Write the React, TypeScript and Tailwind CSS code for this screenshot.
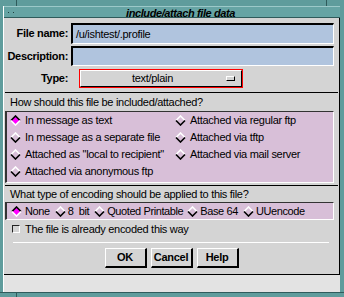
import React from 'react';

function Diamond({ on }: { on?: boolean }) {
  return (
    <svg width="11" height="11" viewBox="0 0 11 11" className="shrink-0">
      {on && <polygon points="5.5,1 10,5.5 5.5,10 1,5.5" fill="#ff00ff" />}
      <polyline points="1,5.5 5.5,1 10,5.5" fill="none" stroke={on ? '#000' : '#fff'} strokeWidth="1.6" />
      <polyline points="1,5.5 5.5,10 10,5.5" fill="none" stroke={on ? '#fff' : '#000'} strokeWidth="1.6" />
    </svg>
  );
}

function Radio({ label, on }: { label: string; on?: boolean }) {
  return (
    <div className="h-[17px] flex items-center gap-[4px]">
      <Diamond on={on} />
      <span className="whitespace-pre">{label}</span>
    </div>
  );
}

export default function App() {
  const field = 'ml-[3px] w-[263px] bg-[#b0c4de] border-t-2 border-l-2 border-black border-b border-r border-b-white border-r-white';
  const btn = 'w-[42px] h-[20px] bg-[#d4d4d4] border-t border-l border-white border-b-2 border-r-2 border-b-black border-r-black font-bold flex items-center justify-center';

  return (
    <div className="w-[344px] h-[297px] bg-[#5f9c9c] flex flex-col overflow-hidden text-[11px] text-black tracking-[-0.3px] font-['Liberation_Sans',Arial,sans-serif]">
      <div className="h-[6px] flex shrink-0">
        <div className="ml-[16px] w-px bg-[#2f5b5b]" />
        <div className="ml-[309px] w-px bg-[#2f5b5b]" />
      </div>

      <div className="ml-[3px] w-[337px] flex flex-col border-l border-white shrink-0">
        {/* title bar */}
        <div className="h-[12px] bg-[#66a4a4] border-t border-[#9cc9c9] border-b border-b-[#2f5b5b] flex items-center relative">
          <div className="flex gap-[4px] ml-[4px]">
            <div className="w-px h-px bg-[#1f3f3f]" />
            <div className="w-px h-px bg-[#1f3f3f]" />
          </div>
          <span className="absolute left-[122px] top-[-2px] italic font-bold text-[11px] tracking-[-0.4px]">include/attach file data</span>
        </div>

        {/* body */}
        <div className="h-[257px] bg-[#d4d4d4] border-r border-b border-black flex flex-col">
          <div className="mt-[5px] flex items-center">
            <div className="w-[64px] text-right font-bold">File name:</div>
            <div className={`${field} h-[21px] flex items-center pl-[3px]`}>/u/ishtest/.profile</div>
          </div>
          <div className="mt-[2px] flex items-center">
            <div className="w-[64px] text-right font-bold">Description:</div>
            <div className={`${field} h-[20px]`} />
          </div>
          <div className="mt-[3px] flex items-center">
            <div className="w-[64px] text-right font-bold">Type:</div>
            <div className="ml-[11px] w-[164px] h-[19px] border border-[#ff0000]">
              <div className="h-full bg-[#d4d4d4] border-t border-l border-white border-b border-r border-b-black border-r-black flex items-center">
                <span className="ml-[51px]">text/plain</span>
                <div className="ml-auto mr-[6px] w-[9px] h-[5px] border-t border-l border-white border-b border-r border-b-black border-r-black" />
              </div>
            </div>
          </div>

          <div className="mt-[4px] mx-[1px] h-px bg-black" />
          <div className="h-[18px] flex items-center pl-[6px]">How should this file be included/attached?</div>

          <div className="ml-[1px] w-[329px] bg-[#d8bfd8] border-t border-l-2 border-[#333] border-b border-r border-b-white border-r-white pl-[3px] pb-[2px] flex">
            <div className="w-[165px] flex flex-col">
              <Radio label="In message as text" on />
              <Radio label="In message as a separate file" />
              <Radio label='Attached as "local to recipient"' />
              <Radio label="Attached via anonymous ftp" />
            </div>
            <div className="flex flex-col">
              <Radio label="Attached via regular ftp" />
              <Radio label="Attached via tftp" />
              <Radio label="Attached via mail server" />
            </div>
          </div>

          <div className="mt-[2px] mx-[1px] h-px bg-black" />
          <div className="h-[16px] flex items-center pl-[6px]">What type of encoding should be applied to this file?</div>

          <div className="ml-[1px] w-[329px] h-[18px] bg-[#d8bfd8] border-t border-l-2 border-[#333] border-b border-r border-b-white border-r-white pl-[4px] flex items-center tracking-[-0.4px]">
            <div className="flex items-center gap-[3px]"><Diamond on /><span>None</span></div>
            <div className="ml-[5px] flex items-center gap-[2px]"><Diamond /><span className="whitespace-pre">8  bit</span></div>
            <div className="ml-[5px] flex items-center gap-[2px]"><Diamond /><span>Quoted Printable</span></div>
            <div className="ml-[4px] flex items-center gap-[2px]"><Diamond /><span>Base 64</span></div>
            <div className="ml-[5px] flex items-center gap-[2px]"><Diamond /><span>UUencode</span></div>
          </div>

          <div className="h-[18px] flex items-center pl-[8px] gap-[5px]">
            <div className="w-[8px] h-[8px] border border-[#222] border-b-white border-r-white" />
            <span>The file is already encoded this way</span>
          </div>

          <div className="mt-[4px] ml-[9px] w-[316px] h-px bg-white" />

          <div className="mt-[5px] flex justify-center gap-[4px]">
            <div className={btn}>OK</div>
            <div className={btn}>Cancel</div>
            <div className={btn}>Help</div>
          </div>
        </div>

        <div className="h-[17px] bg-[#e3e3e3]" />
      </div>

      <div className="flex-1 flex border-t border-[#2f5b5b]">
        <div className="ml-[16px] w-px bg-[#2f5b5b]" />
      </div>
    </div>
  );
}
